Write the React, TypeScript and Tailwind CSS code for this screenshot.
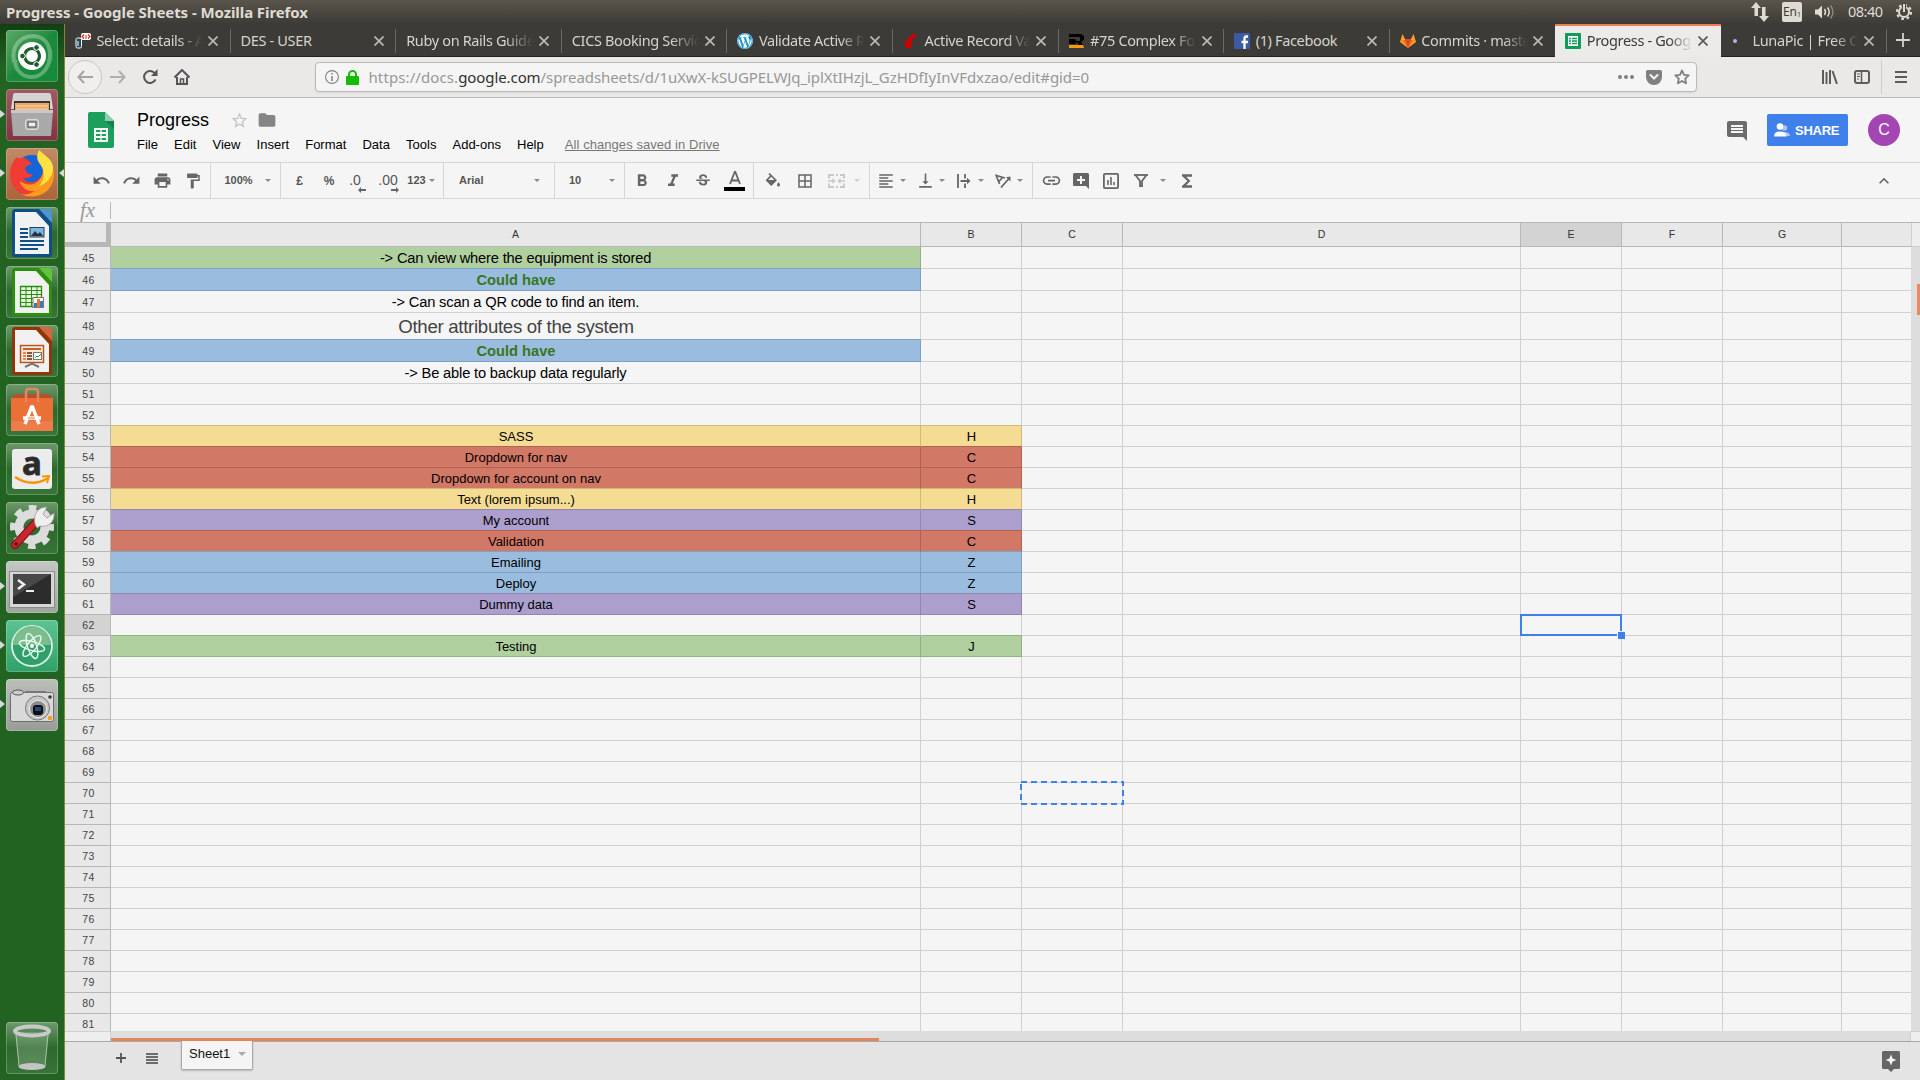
import React from "react";
import {
  MdUndo, MdRedo, MdPrint, MdFormatPaint, MdFormatItalic, MdFormatBold, MdStrikethroughS,
  MdBorderAll, MdFormatAlignLeft, MdVerticalAlignBottom, MdInsertLink, MdFolder, MdStarBorder,
  MdFunctions, MdKeyboardArrowUp, MdComment,
} from "react-icons/md";
import { FaWordpress } from "react-icons/fa";

type Kids = { children?: React.ReactNode };

/* ---------- system panel ---------- */

function TopPanel() {
  return (
    <div className="flex h-6 shrink-0 items-center bg-linear-to-b from-[#59554c] to-[#3d3b37] text-[#dfdbd2]">
      <span className="ml-[6px] whitespace-nowrap text-[15px] font-bold tracking-[-0.08px]">Progress - Google Sheets - Mozilla Firefox</span>
      <div className="ml-auto flex items-center pr-[8px]">
        <svg width="18" height="20" viewBox="0 0 18 20" fill="#dfdbd2" className="mr-[13px]">
          <path d="M5 0l5 6H7v8H3.500V6H0zM13 20l-5-6h3V5h3.500v9H18z" />
        </svg>
        <span className="mr-[13px] flex h-5 w-5 items-center justify-center rounded-[2px] bg-[#dfdbd2] text-[12px] text-[#3c3b37]">
          En<span className="mt-[7px] text-[7px]">1</span>
        </span>
        <svg width="20" height="16" viewBox="0 0 20 16" className="mr-[13px]" fill="none" stroke="#dfdbd2" strokeWidth="1.500">
          <path d="M0 5.500h3l4-4v13l-4-4H0z" fill="#dfdbd2" stroke="none" />
          <path d="M9.500 5q2 3 0 6M12.500 3.500q3.500 4.500 0 9" />
          <path d="M15.500 1.500q5 6.500 0 13" stroke="#8a867d" />
        </svg>
        <span className="mr-[13px] w-[35px] text-[14.500px] tracking-[-0.5px]">08:40</span>
        <svg width="16" height="18" viewBox="0 0 16 18" fill="none" stroke="#dfdbd2">
          <circle cx="8" cy="9" r="5" strokeWidth="2" />
          <circle cx="8" cy="9" r="7" strokeWidth="2.200" strokeDasharray="2.700 2.800" />
          <path d="M8 0v9" stroke="#48453e" strokeWidth="4" />
          <path d="M8 1v8" strokeWidth="2" />
        </svg>
      </div>
    </div>
  );
}

/* ---------- launcher ---------- */

function Tile({ bg, run, active, children }: Kids & { bg: string; run?: boolean; active?: boolean }) {
  return (
    <div className="relative flex h-[52px] w-full shrink-0 justify-center pr-px">
      {run && <span className="absolute top-[21px] left-0 border-y-[4px] border-l-[5px] border-y-transparent border-l-[#d8d8d8]" />}
      {active && <span className="absolute top-[21px] right-0 border-y-[4px] border-r-[5px] border-y-transparent border-r-[#d8d8d8]" />}
      <div className={"h-[52px] w-[52px] rounded-[4px] shadow-[inset_0_0_0_1px_rgba(255,255,255,0.22)] " + bg}>
        <svg width="52" height="52" viewBox="0 0 52 52">{children}</svg>
      </div>
    </div>
  );
}

const glass = "bg-linear-to-b from-[#6d9a6c] via-[#2c692c] to-[#397539]";

function OfficeDoc({ color, light, children }: Kids & { color: string; light: string }) {
  return (
    <>
      <path d="M8 2h26l12 12v33q0 3-3 3H9q-3 0-3-3V4z" fill={color} />
      <path d="M33 2h10q3 0 3 3v11z" fill={light} />
      <path d="M9 5h21l13 14v28H9z" fill="#f1f1f1" />
      {children}
    </>
  );
}

function Launcher() {
  return (
    <div className="flex w-[65px] shrink-0 flex-col gap-[7px] border-r border-[#7c8a3a] bg-linear-to-b from-[#123f12] via-[#226322] via-[4%] to-[#226322] pt-[6px] pb-[6px]">
      <Tile bg="bg-linear-to-br from-[#5aa968] via-[#1b8a3c] to-[#158a3a]">
        <path d="M8 32C5 16 14 6 28 6c14 1 18 14 15 26M44 20c2 16-8 28-20 27C14 46 9 38 9 30" fill="none" stroke="#fff" strokeOpacity=".3" strokeWidth="4" />
        <circle cx="26" cy="26" r="14" fill="#fff" />
        <circle cx="26" cy="26" r="7.500" fill="none" stroke="#1d5a2c" strokeWidth="3.200" />
        {[[16.5, 26], [30.5, 17.500], [30.5, 34.500]].map(([x, y]) => (
          <circle key={x + "-" + y} cx={x} cy={y} r="2.800" fill="#1d5a2c" stroke="#fff" strokeWidth="1" />
        ))}
      </Tile>
      <Tile run bg="bg-linear-to-b from-[#a05a62] to-[#7d3640]">
        <path d="M7 6q0-2 2-2h34q2 0 2 2l2 14H5z" fill="#d4d4d4" />
        <path d="M8 12h36v10H8z" fill="#3d3530" />
        <path d="M9 14h34v8H9z" fill="#e9a565" />
        <path d="M10 17h32M10 20h32" stroke="#f6dcc0" />
        <path d="M5 21h42l-2 26H7z" fill="#a9a9a9" />
        <path d="M5 21h42v3H5z" fill="#c9c9c9" />
        <rect x="19.500" y="30.500" width="13" height="10" rx="2" fill="#b8b8b8" stroke="#ddd" />
        <rect x="22" y="33" width="8" height="5" fill="#eee" stroke="#444" />
      </Tile>
      <Tile run active bg="bg-linear-to-b from-[#c08a66] to-[#a9653a]">
        <circle cx="26" cy="26" r="19" fill="#1565d8" />
        <path d="M33 2c2 5-1 8 2 12 3 5 3 12-2 17-5 5-13 4-16-1 4 1 8 0 10-4-5 1-7-2-8-6 2-3 5-3 7-4-2-2-5-4-7-6-4-1-7 2-8-1-4 4-7 10-7 17 0 14 10 22 22 22s22-10 22-22C48 15 40 8 33 2z" fill="#f03c35" />
        <path d="M33 2c2 5-1 8 2 12 4 8 2 16-4 20-5 4-13 3-17-1 1 7 8 11 15 10-5 3-10 4-14 3 14 7 33-1 33-20C48 15 40 8 33 2z" fill="#ff9a1e" />
        <path d="M33 2c-2 5-3 9 1 14 6 8 4 17-1 22 9-3 15-11 14-20C45 10 38 7 33 2z" fill="#ffe13f" />
      </Tile>
      <Tile bg={glass}>
        <OfficeDoc color="#0d4f86" light="#4f94cf">
          <path d="M14 22h8M14 26h8M14 30h8M14 34h24M14 38h24M14 42h18" stroke="#0d4f86" strokeWidth="1.800" />
          <rect x="24" y="20.500" width="14" height="9.500" fill="#7fb7de" stroke="#23435e" />
          <path d="M25 29l4-5 3 3 2-2 3 4z" fill="#27323a" />
        </OfficeDoc>
      </Tile>
      <Tile bg={glass}>
        <OfficeDoc color="#2a8f0f" light="#63c23d">
          <path d="M14.500 20.500h21v20h-21z" fill="#e6f3df" stroke="#2a8f0f" strokeWidth="1.300" />
          <path d="M14 24.500h22M14 28.500h22M14 32.500h22M14 36.500h22M20 20v21M25.500 20v21M31 20v21" stroke="#2a8f0f" />
          <rect x="27" y="31.500" width="10.500" height="10" fill="#fff" stroke="#777" />
          <path d="M28 37h3v4h-3zM34 35h3v6h-3z" fill="#2c7fc4" /><path d="M31 33h3v8h-3z" fill="#e8772a" />
        </OfficeDoc>
      </Tile>
      <Tile bg={glass}>
        <OfficeDoc color="#933506" light="#d3673f">
          <rect x="14.500" y="20.500" width="23" height="17" fill="#f7e6d7" stroke="#b5501b" strokeWidth="1.400" />
          <path d="M17 24h18" stroke="#c4642a" strokeWidth="2" />
          <path d="M17 28h3M17 31h3M17 34h3" stroke="#e08a4e" strokeWidth="2" /><path d="M21 28h5M21 31h5M21 34h5" stroke="#5a2a10" strokeWidth="1.500" />
          <rect x="27.500" y="27.500" width="8" height="7" fill="#fff" stroke="#777" /><path d="M29 33l2-2 1 1 3-3" stroke="#2e9a2e" fill="none" />
          <path d="M26 38v2M19 42l6-3h2l6 3" stroke="#777" strokeWidth="2" fill="none" />
        </OfficeDoc>
      </Tile>
      <Tile bg={glass}>
        <path d="M5 14l5-4h32l5 4z" fill="#b5542c" />
        <path d="M5 14h42v33H5z" fill="#ea7038" /><path d="M5 37h42v10H5z" fill="#ed7c49" />
        <path d="M20 18V8q0-3 3-3h6q3 0 3 3v10" fill="none" stroke="#e28465" strokeWidth="2.500" />
        <path d="M19 40l6.500-17h1L33 40" fill="none" stroke="#fff" strokeWidth="3.500" /><path d="M17 34h18" stroke="#fff" strokeWidth="3.500" /><path d="M22 34h7" stroke="#ea7038" strokeWidth="1" />
      </Tile>
      <Tile bg={glass}>
        <rect x="6" y="6" width="40" height="40" rx="3" fill="#ececec" />
        <text x="26" y="32" textAnchor="middle" fontSize="33" fontWeight="bold" fill="#2b2b2b" stroke="#2b2b2b" strokeWidth=".8">a</text>
        <path d="M9 34q17 11 33 1" fill="none" stroke="#f79400" strokeWidth="2.500" /><path d="M36 33.500l7-.5-2 7" fill="none" stroke="#f79400" strokeWidth="2" />
      </Tile>
      <Tile bg={glass}>
        <circle cx="26" cy="25" r="19" fill="none" stroke="#dcdcdc" strokeWidth="6" strokeDasharray="7.500 7.420" strokeDashoffset="3.750" />
        <circle cx="26" cy="25" r="13" fill="none" stroke="#dcdcdc" strokeWidth="9" />
        <path d="M9 43l24-26" stroke="#7e1218" strokeWidth="8" strokeLinecap="round" />
        <path d="M9 43l24-26" stroke="#c9252d" strokeWidth="6" strokeLinecap="round" />
        <path d="M29 22c-2-9 2-17 12-17l-4 7 4 4 7-5c1 9-6 15-14 13l-3 2z" fill="#efefef" stroke="#999" strokeWidth=".8" />
        <circle cx="10" cy="42" r="1.800" fill="#5e0d12" />
      </Tile>
      <Tile run bg="bg-linear-to-b from-[#c4c8c2] to-[#9ea39c]">
        <rect x="3.500" y="10.500" width="45" height="36" fill="#d6d6d6" stroke="#8b8b8b" />
        <rect x="7" y="13" width="38" height="30" fill="#2c2c2c" /><path d="M7 13h38L7 36z" fill="#484848" />
        <path d="M12 19l6 4.500-6 4.500" fill="none" stroke="#eee" strokeWidth="2.500" /><path d="M20 30h8" stroke="#eee" strokeWidth="2" />
      </Tile>
      <Tile run bg="bg-linear-to-b from-[#5cc394] to-[#2ea168]">
        <circle cx="26" cy="26" r="20" fill="#2fa06b" stroke="#dcefe4" strokeWidth="1.800" />
        <path d="M7 25a19 19 0 0138 0z" fill="#79be8b" />
        <g fill="none" stroke="#eaf6ee" strokeWidth="1.400">
          <ellipse cx="26" cy="26" rx="13" ry="4.500" transform="rotate(15 26 26)" />
          <ellipse cx="26" cy="26" rx="13" ry="4.500" transform="rotate(72 26 26)" />
          <ellipse cx="26" cy="26" rx="13" ry="4.500" transform="rotate(130 26 26)" />
        </g>
        <circle cx="26" cy="26" r="2" fill="#fff" />
      </Tile>
      <Tile run bg="bg-linear-to-b from-[#b9bfb8] to-[#989d97]">
        <rect x="4.500" y="13.500" width="43" height="29" rx="2" fill="#d9d9d9" stroke="#6e6e6e" />
        <ellipse cx="12" cy="13.500" rx="5.500" ry="2.500" fill="#ccc" stroke="#555" />
        <path d="M19 13h21" stroke="#777" strokeWidth="2" />
        <circle cx="31.500" cy="29" r="12" fill="#c9c9c9" stroke="#777" /><circle cx="32" cy="30" r="8.500" fill="#8c8c8c" stroke="#eee" />
        <rect x="27" y="26" width="10" height="10" rx="3" fill="#0d0f14" /><rect x="29" y="28" width="6" height="4" fill="#24457e" />
        <rect x="42" y="37" width="4" height="4" fill="#f0a028" /><circle cx="44" cy="18" r="1.800" fill="#333" />
      </Tile>
      <div className="mt-auto">
        <Tile bg={glass}>
          <path d="M9 10l4 36h26l4-36z" fill="#fff" fillOpacity=".18" />
          <ellipse cx="26" cy="44.500" rx="13.500" ry="3.500" fill="#c4c4c4" />
          <ellipse cx="26" cy="9" rx="17" ry="4.500" fill="none" stroke="#c9c9c9" strokeWidth="4" />
          <path d="M10 12l3 32M42 12l-3 32" stroke="#a9c0a9" strokeWidth="1" />
        </Tile>
      </div>
    </div>
  );
}

/* ---------- browser tabs ---------- */

const SheetsFav = () => (
  <svg width="16" height="16" viewBox="0 0 16 16">
    <rect width="16" height="16" rx="1" fill="#0f9d58" /><rect x="3" y="3" width="10" height="10" fill="#fff" />
    <path d="M4 5.500h2M7 5.500h5M4 8h2M7 8h5M4 10.500h2M7 10.500h5" stroke="#0f9d58" strokeWidth="1.300" />
  </svg>
);

const tabs: { title: string; icon?: React.ReactNode; active?: boolean }[] = [
  {
    title: "Select: details - A",
    icon: (
      <svg width="16" height="16" viewBox="0 0 16 16">
        <rect x="1" y="5" width="5.500" height="10" rx="1.500" fill="#24495c" stroke="#fff" /><path d="M3 8v5" stroke="#fff" />
        <rect x="6" y="0" width="10" height="7" rx="2" fill="#fff" /><path d="M9 1.500L7 3.500l2 2M13 1.500l2 2-2 2" stroke="#d22" fill="none" strokeWidth="1.200" /><path d="M11 2v4" stroke="#d22" />
      </svg>
    ),
  },
  { title: "DES - USER" },
  { title: "Ruby on Rails Guide" },
  { title: "CICS Booking Servic" },
  { title: "Validate Active R", icon: <span className="flex h-4 w-4 items-center justify-center rounded-full bg-[#1a94cc] text-white"><FaWordpress size={16} /></span> },
  {
    title: "Active Record Va",
    icon: (
      <svg width="16" height="16" viewBox="0 0 16 16">
        <path d="M2 15C3 7 7 2 12 1l2 1C10 5 8 9 8.500 15z" fill="#c00" /><path d="M1 11l1-1M2 7.500l1.300.5M5 3.500l1 1M9 .8l.5 1" stroke="#c00" strokeWidth="1.400" />
      </svg>
    ),
  },
  {
    title: "#75 Complex For",
    icon: (
      <svg width="16" height="16" viewBox="0 0 16 16">
        <path d="M0 1h12l3 2v4l-3 2 2 3h-4L7 8h4V4H0z" fill="#000" /><path d="M0 6h6l2 3-2 2H0z" fill="#000" /><path d="M0 12h14l1 3H0z" fill="#f79a10" />
      </svg>
    ),
  },
  {
    title: "(1) Facebook",
    icon: (
      <svg width="16" height="16" viewBox="0 0 16 16">
        <rect width="16" height="16" rx="1" fill="#3b5ba5" /><path d="M14 3.500h-1.500q-2 0-2 2V16M7.500 9H14" stroke="#fff" strokeWidth="2.300" fill="none" />
      </svg>
    ),
  },
  {
    title: "Commits · maste",
    icon: (
      <svg width="16" height="16" viewBox="0 0 16 16">
        <path d="M8 15L0 9l2.500-8L5 6h6l2.500-5L16 9z" fill="#fca326" /><path d="M8 15L2 7h12z" fill="#fc6d26" /><path d="M8 15L5 6h6z" fill="#e24329" />
      </svg>
    ),
  },
  { title: "Progress - Google", icon: <SheetsFav />, active: true },
  { title: "LunaPic | Free On", icon: <span className="ml-[2px] h-1 w-1 rounded-full bg-[#b4b4ee]" /> },
];

function TabBar() {
  return (
    <div className="flex h-[33px] shrink-0 bg-[#3c3b37] text-[14.500px] text-[#d6d3cb]">
      {tabs.map((t, i) => (
        <div
          key={t.title}
          className={
            "relative flex w-[165.6px] shrink-0 items-center pl-[10px] " +
            (t.active ? "border-t-2 border-[#ee7d54] bg-[#edebe9] pb-px text-[#3c3b37]" : "border-b border-[#242021] pt-[2px]")
          }
        >
          {t.icon && <span className="flex w-[21.5px] shrink-0 items-center">{t.icon}</span>}
          <span
            className={
              "overflow-hidden tracking-[-0.35px] whitespace-nowrap " +
              (t.title.length > 12 ? "mask-r-from-[78%] mask-r-to-[100%] " : "") +
              (t.icon ? "w-[105.5px]" : "w-[127px]")
            }
          >
            {t.title}
          </span>
          <svg width="10" height="10" viewBox="0 0 10 10" className="ml-[6px] shrink-0" stroke={t.active ? "#5a5955" : "#bdbab2"} strokeWidth="1.700">
            <path d="M.5.5l9 9M9.500.5l-9 9" />
          </svg>
          {!t.active && i !== 8 && <span className="absolute top-[5px] right-0 h-6 w-px bg-[#6b6962]" />}
        </div>
      ))}
      <div className="flex flex-1 items-center justify-center border-b border-[#242021]">
        <svg width="14" height="14" viewBox="0 0 14 14" stroke="#d6d3cb" strokeWidth="1.800"><path d="M7 0v14M0 7h14" /></svg>
      </div>
    </div>
  );
}

/* ---------- navigation bar ---------- */

function NavBar() {
  return (
    <div className="flex h-[41px] shrink-0 items-center border-b border-[#b9b9b9] bg-[#ebe9e7] text-[#5c5c5a]">
      <span className="ml-[3px] flex h-[34px] w-[34px] items-center justify-center rounded-full border border-[#c8c6c4] bg-[#f0efed]">
        <svg width="16" height="14" viewBox="0 0 16 14" fill="none" stroke="#a5a4a2" strokeWidth="2"><path d="M7 1L1.500 7 7 13M1.500 7H16" /></svg>
      </span>
      <svg width="16" height="14" viewBox="0 0 16 14" fill="none" stroke="#b0afad" strokeWidth="2" className="ml-[8px]"><path d="M9 1l5.500 6L9 13M14.500 7H0" /></svg>
      <svg width="16" height="16" viewBox="0 0 16 16" fill="none" stroke="#555" strokeWidth="2" className="ml-[16px]"><path d="M13.500 10.500A6 6 0 1113 4.500" /><path d="M15.500 0v7H9z" fill="#555" stroke="none" /></svg>
      <svg width="16" height="16" viewBox="0 0 16 16" fill="none" stroke="#555" strokeWidth="2" className="ml-[16px]"><path d="M.5 8.500L8 1l7.500 7.500M3 8v7h10V8" /><path d="M6.500 15v-5h3v5" strokeWidth="1.500" /></svg>
      <div className="ml-[125px] flex h-[30px] w-[1382px] items-center rounded-[4px] border border-[#bdbbb9] bg-[#f5f5f5] shadow-[0_1px_2px_rgba(0,0,0,0.08)]">
        <svg width="14" height="14" viewBox="0 0 14 14" className="ml-[9px]" fill="none" stroke="#808080"><circle cx="7" cy="7" r="6.400" strokeWidth="1.100" /><path d="M7 6v5M7 3v1.600" strokeWidth="1.500" /></svg>
        <svg width="13" height="15" viewBox="0 0 13 15" className="ml-[6.500px]"><rect x="0" y="6" width="13" height="9" rx="1" fill="#12bc00" /><path d="M3 7V4.500a3.500 3.500 0 017 0V7" fill="none" stroke="#12bc00" strokeWidth="2" /></svg>
        <span className="ml-[10px] text-[15px] tracking-[-0.09px] whitespace-nowrap text-[#989898]">
          <span className="tracking-[0.1px]">https://docs.</span><span className="text-[#303030]">google.com</span>/spreadsheets/d/1uXwX-kSUGPELWJq_iplXtIHzjL_GzHDfIyInVFdxzao/edit#gid=0
        </span>
        <div className="ml-auto flex items-center pr-[6px]">
          <svg width="16" height="4" viewBox="0 0 16 4" fill="#808080"><circle cx="2" cy="2" r="2" /><circle cx="8" cy="2" r="2" /><circle cx="14" cy="2" r="2" /></svg>
          <svg width="16" height="15" viewBox="0 0 16 15" className="ml-[12px]"><path d="M1.500 0h13Q16 0 16 1.500V7a8 8 0 01-16 0V1.500Q0 0 1.500 0z" fill="#808080" /><path d="M4.500 5L8 8.500 11.500 5" fill="none" stroke="#f5f5f5" strokeWidth="2" strokeLinecap="round" /></svg>
          <svg width="16" height="16" viewBox="0 0 16 16" className="ml-[12px]"><path d="M8 1.500l2 4.300 4.700.6-3.500 3.200.9 4.700L8 12l-4.100 2.300.9-4.700L1.300 6.400 6 5.800z" fill="none" stroke="#808080" strokeWidth="1.800" strokeLinejoin="round" /></svg>
        </div>
      </div>
      <div className="ml-auto flex items-center pr-[13px]">
        <svg width="16" height="14" viewBox="0 0 16 14" fill="none" stroke="#5c5c5a" strokeWidth="2"><path d="M1 0v14M4.500 2v12M8 0v14M10.500 1l4.500 13" /></svg>
        <svg width="16" height="14" viewBox="0 0 16 14" fill="none" stroke="#5c5c5a" className="ml-[16px]"><rect x="1" y="1" width="14" height="12" rx="2" strokeWidth="2" /><path d="M7.500 1v12" strokeWidth="1.500" /><path d="M3 4h3M3 6.500h3M3 9h2" /></svg>
        <span className="ml-[11px] h-[34px] w-px bg-[#cfcdcb]" />
        <svg width="12" height="12" viewBox="0 0 12 12" stroke="#5c5c5a" strokeWidth="2" className="ml-[13px]"><path d="M0 1h12M0 6h12M0 11h12" /></svg>
      </div>
    </div>
  );
}

/* ---------- document header ---------- */

function DocHeader() {
  return (
    <div className="flex h-[65px] shrink-0 border-b border-[#d6d6d6]">
      <svg width="26" height="36" viewBox="0 0 26 36" className="mt-[14px] ml-[23px]">
        <path d="M2 0h15l9 9v25q0 2-2 2H2q-2 0-2-2V2Q0 0 2 0z" fill="#1c9f5c" />
        <path d="M17 9h9v8z" fill="#178249" />
        <path d="M17 0l9 9h-9z" fill="#8ccfac" />
        <path d="M6 16h14v14H6z" fill="#f4f4f4" />
        <path d="M8 19h4.300M13.700 19H18M8 23h4.300M13.700 23H18M8 27h4.300M13.700 27H18" stroke="#1c9f5c" strokeWidth="2" />
      </svg>
      <div className="ml-[23px] flex flex-col">
        <div className="mt-[10px] flex h-[24px] items-center">
          <span className="w-[72px] text-[18px] leading-[24px] text-black">Progress</span>
          <MdStarBorder size={19} className="ml-[20.500px]" color="#c4c4c4" />
          <MdFolder size={20} className="ml-[8px]" color="#858585" />
        </div>
        <div className="mt-[4px] flex h-[18px] items-center gap-[16.1px] text-[13px] text-black">
          {["File", "Edit", "View", "Insert", "Format", "Data", "Tools", "Add-ons", "Help"].map((m) => (
            <span key={m}>{m}</span>
          ))}
          <span className="ml-[5px] tracking-[0.06px] text-[#777] underline underline-offset-1">All changes saved in Drive</span>
        </div>
      </div>
      <div className="ml-auto flex items-center pr-[20px]">
        <MdComment size={24} color="#6b6b6b" className="mt-px" />
        <div className="ml-[18px] flex h-8 w-[81px] items-center rounded-[2px] bg-[#4080ea] pl-[7px] text-[13px] font-bold text-white">
          <svg width="16" height="14" viewBox="0 0 16 14"><circle cx="10.500" cy="5" r="2.800" fill="#a8c5f6" /><path d="M9 13q0-4 3-4 4 .5 4 4z" fill="#a8c5f6" /><circle cx="6" cy="3.500" r="3.300" fill="#fff" /><path d="M0 13.500q0-5 6-5 6.500 0 6.500 5z" fill="#fff" /></svg>
          <span className="mt-px ml-[5px] tracking-[-0.25px]">SHARE</span>
        </div>
        <span className="ml-[20px] flex h-8 w-8 items-center justify-center rounded-full bg-[#a345b3] text-[16px] text-white">C</span>
      </div>
    </div>
  );
}

/* ---------- toolbar ---------- */

const Caret = ({ dim }: { dim?: boolean }) => (
  <span className={"h-0 w-0 shrink-0 border-x-[3px] border-t-[3.500px] border-x-transparent " + (dim ? "border-t-[#cfcfcf]" : "border-t-[#8a8a8a]")} />
);
const Cell = ({ w, children }: Kids & { w: string }) => (
  <span className={"flex shrink-0 items-center justify-center [&>*]:shrink-0 " + w}>{children}</span>
);
const Group = ({ w, children }: Kids & { w: string }) => (
  <div className={"flex h-full shrink-0 items-center border-r border-[#d6d6d6] " + w}>{children}</div>
);

function Toolbar() {
  return (
    <div className="flex h-[36px] shrink-0 items-center border-b border-[#d6d6d6] text-[11px] font-bold text-[#555]">
      <Group w="w-[146px] pl-[21px]">
        <Cell w="w-[30.5px]"><MdUndo size={19} color="#666" /></Cell>
        <Cell w="w-[30.5px]"><MdRedo size={19} color="#666" /></Cell>
        <Cell w="w-[30.5px]"><MdPrint size={19} color="#666" /></Cell>
        <Cell w="w-[30.5px]"><MdFormatPaint size={18} color="#666" /></Cell>
      </Group>
      <Group w="w-[70px]"><Cell w="w-[55px]">100%</Cell><Cell w="w-[4px]"><Caret /></Cell></Group>
      <Group w="w-[163px]">
        <Cell w="w-[37px] text-[12px]">£</Cell>
        <Cell w="w-[22px] text-[12px]">%</Cell>
        <Cell w="w-[30px]">
          <span className="relative text-[14px] font-normal">.0<svg width="8" height="6" viewBox="0 0 8 6" className="absolute right-[-5px] bottom-[-2px]" fill="#666"><path d="M0 3l3-3v2h5v2H3v2z" /></svg></span>
        </Cell>
        <Cell w="w-[36px]">
          <span className="relative text-[14px] font-normal">.00<svg width="8" height="6" viewBox="0 0 8 6" className="absolute right-[-1px] bottom-[-2px]" fill="#666"><path d="M8 3L5 0v2H0v2h5v2z" /></svg></span>
        </Cell>
        <Cell w="w-[21px]">123</Cell>
        <Cell w="w-[9px]"><Caret /></Cell>
      </Group>
      <Group w="w-[111px] pl-[15px]"><span className="w-[71px]">Arial</span><Cell w="w-[14px]"><Caret /></Cell></Group>
      <Group w="w-[70px] pl-[14px]"><span className="w-[36px]">10</span><Cell w="w-[14px]"><Caret /></Cell></Group>
      <Group w="w-[129px]">
        <Cell w="w-[34px]"><MdFormatBold size={20} color="#666" /></Cell>
        <Cell w="w-[28px]"><MdFormatItalic size={20} color="#666" /></Cell>
        <Cell w="w-[32px]"><MdStrikethroughS size={18} color="#666" /></Cell>
        <Cell w="w-[31px]">
          <svg width="22" height="20" viewBox="0 0 22 20"><path d="M6 13L10.700 1h.6L16 13M7.500 9.500h7" fill="none" stroke="#666" strokeWidth="1.800" /><path d="M0 16h21v4H0z" fill="#000" /></svg>
        </Cell>
      </Group>
      <Group w="w-[116px]">
        <Cell w="w-[38px]">
          <svg width="16" height="16" viewBox="0 0 16 16" fill="#666"><path d="M3.500 1.200L4.700 0 12 7.200 6.300 13 .6 7.200 5 2.800z" /><path d="M6.300 3.800L3.200 7h6.200z" fill="#f5f5f5" /><path d="M13.500 9q1.500 2 1.500 3a1.500 1.500 0 01-3 0q0-1 1.500-3z" /></svg>
        </Cell>
        <Cell w="w-[25px]"><MdBorderAll size={18} color="#666" /></Cell>
        <Cell w="w-[38px]">
          <svg width="17" height="14" viewBox="0 0 17 14" fill="none" stroke="#c8c8c8"><path d="M1 4.500V1h5M8 1h2M12 1h4v3.500M1 9.500V13h5M8 13h2M12 13h4V9.500" strokeWidth="1.900" /><path d="M0 7h6M17 7h-6" strokeWidth="1.600" /><path d="M4.500 4L7.500 7l-3 3zM12.500 4l-3 3 3 3z" fill="#c8c8c8" stroke="none" /></svg>
        </Cell>
        <Cell w="w-[4px]"><Caret dim /></Cell>
      </Group>
      <Group w="w-[163px] pl-[4px]">
        <Cell w="w-[24px]"><MdFormatAlignLeft size={18} color="#666" /></Cell><Cell w="w-[10px]"><Caret /></Cell>
        <Cell w="ml-[5px] w-[24px]"><MdVerticalAlignBottom size={19} color="#666" /></Cell><Cell w="w-[10px]"><Caret /></Cell>
        <Cell w="ml-[5px] w-[24px]">
          <svg width="14" height="14" viewBox="0 0 14 14" fill="none" stroke="#666" strokeWidth="1.800"><path d="M1 0v14M8 0v4.500M8 9.500V14M3.500 7H12" /><path d="M10 3.800L13.500 7 10 10.200z" fill="#666" stroke="none" /></svg>
        </Cell><Cell w="w-[10px]"><Caret /></Cell>
        <Cell w="ml-[5px] w-[24px]">
          <svg width="16" height="14" viewBox="0 0 16 14" fill="none" stroke="#666" strokeWidth="1.700"><path d="M4.500 10L1.200 1.500 10 4M3.500 8L7.500 3.500" /><path d="M6 13.500l8-9" /><path d="M15.500 2.500V7.500L11 3.300z" fill="#666" stroke="none" /></svg>
        </Cell><Cell w="w-[10px]"><Caret /></Cell>
      </Group>
      <Cell w="w-[36px]"><MdInsertLink size={21} color="#666" /></Cell>
      <Cell w="w-[24px]">
        <svg width="16" height="16" viewBox="0 0 16 16"><path d="M1.500 0h13Q16 0 16 1.500V16l-3-3H1.500Q0 13 0 11.500v-10Q0 0 1.500 0z" fill="#666" /><path d="M8 3v8M4 7h8" stroke="#f5f5f5" strokeWidth="2" /></svg>
      </Cell>
      <Cell w="w-[36px]">
        <svg width="16" height="16" viewBox="0 0 16 16" fill="none" stroke="#666"><rect x=".9" y=".9" width="14.200" height="14.200" rx="1" strokeWidth="1.800" /><path d="M5 7v5M8 4v8M11 9v3" strokeWidth="1.600" /></svg>
      </Cell>
      <Cell w="w-[24px]">
        <svg width="14" height="13" viewBox="0 0 14 13" fill="none" stroke="#666" strokeWidth="1.800"><path d="M0 1h14" /><path d="M1.500 1L6 7v5.500h2V7l4.500-6" /></svg>
      </Cell>
      <Cell w="w-[19px]"><Caret /></Cell>
      <Cell w="w-[30px]"><MdFunctions size={20} color="#666" /></Cell>
      <Cell w="ml-auto w-[72px]"><MdKeyboardArrowUp size={20} color="#666" /></Cell>
    </div>
  );
}

/* ---------- spreadsheet ---------- */

const cols = [
  { n: "A", w: "w-[810px]" }, { n: "B", w: "w-[101px]" }, { n: "C", w: "w-[101px]" }, { n: "D", w: "w-[398px]" },
  { n: "E", w: "w-[101px]" }, { n: "F", w: "w-[101px]" }, { n: "G", w: "w-[119px]" }, { n: "", w: "w-[69px]" },
];

type Tone = "green" | "blue" | "yellow" | "red" | "purple";
const fill: Record<Tone, string> = { green: "bg-[#b0d0a0]", blue: "bg-[#9abddf]", yellow: "bg-[#f4dc93]", red: "bg-[#d27866]", purple: "bg-[#ad9fcd]" };
const bottomLine: Record<Tone, string> = { green: "border-b-[#92b085]", blue: "border-b-[#7f9fc4]", yellow: "border-b-[#d2b97b]", red: "border-b-[#b06352]", purple: "border-b-[#9086b1]" };
const rightLine: Record<Tone, string> = { green: "border-r-[#92b085]", blue: "border-r-[#7f9fc4]", yellow: "border-r-[#d2b97b]", red: "border-r-[#b06352]", purple: "border-r-[#9086b1]" };

type Row = { a?: string; b?: string; tone?: Tone; h?: string; cls?: string };
const big = "pt-[2px] text-[14.667px] tracking-[-0.17px]";
const heading = "pt-[2px] pl-px text-[14.667px] font-bold text-[#38761d]";
const rowData: Record<number, Row> = {
  45: { a: "-> Can view where the equipment is stored", tone: "green", h: "h-[22px]", cls: big },
  46: { a: "Could have", tone: "blue", h: "h-[22px]", cls: heading },
  47: { a: "-> Can scan a QR code to find an item.", h: "h-[22px]", cls: big },
  48: { a: "Other attributes of the system", h: "h-[27px]", cls: "text-[18.667px] tracking-[-0.31px] text-[#434343] pt-[2px] pl-px" },
  49: { a: "Could have", tone: "blue", h: "h-[22px]", cls: heading },
  50: { a: "-> Be able to backup data regularly", h: "h-[22px]", cls: big },
  53: { a: "SASS", b: "H", tone: "yellow" },
  54: { a: "Dropdown for nav", b: "C", tone: "red" },
  55: { a: "Dropdown for account on nav", b: "C", tone: "red" },
  56: { a: "Text (lorem ipsum...)", b: "H", tone: "yellow" },
  57: { a: "My account", b: "S", tone: "purple" },
  58: { a: "Validation", b: "C", tone: "red" },
  59: { a: "Emailing", b: "Z", tone: "blue" },
  60: { a: "Deploy", b: "Z", tone: "blue" },
  61: { a: "Dummy data", b: "S", tone: "purple" },
  63: { a: "Testing", b: "J", tone: "green" },
};
const rowNumbers = Array.from({ length: 37 }, (_, i) => 45 + i);

function toneAt(row: number, col: string): Tone | undefined {
  const r = rowData[row];
  if (!r || !r.tone) return undefined;
  if (col === "A") return r.tone;
  return col === "B" && r.b ? r.tone : undefined;
}

function Sheet() {
  return (
    <div className="flex h-[819px] shrink-0 flex-col border-b border-[#a8a8a8]">
      <div className="flex h-[24px] shrink-0 text-[10.500px] text-[#333]">
        <div className="w-[46px] shrink-0 border-r-[5px] border-b-[5px] border-[#b7b7b7] bg-[#e8e8e8]" />
        {cols.map((c) => (
          <div
            key={c.n}
            className={
              "flex shrink-0 items-center justify-center border-b border-[#b7b7b7] pt-px " + c.w +
              (c.n === "E" ? " bg-[#d3d3d3]" : " bg-[#e8e8e8]") + (c.n === "" ? "" : " border-r")
            }
          >
            {c.n}
          </div>
        ))}
        <div className="flex-1 border-b border-l border-[#d0d0d0] bg-[#eee]" />
      </div>
      <div className="flex h-[784px] shrink-0">
        <div className="w-[1846px] overflow-hidden">
          {rowNumbers.map((n) => {
            const r = rowData[n] || {};
            return (
              <div key={n} className={"flex " + (r.h || "h-[21px]")}>
                <div
                  className={
                    "flex w-[46px] shrink-0 items-center justify-center border-r border-b border-[#b7b7b7] pt-[2px] pl-[2px] text-[10.500px] tracking-[0.3px] text-[#444] " +
                    (n === 62 ? "bg-[#d3d3d3]" : "bg-[#e8e8e8]")
                  }
                >
                  {n}
                </div>
                {cols.map((c) => {
                  const own = toneAt(n, c.n);
                  const line = toneAt(n + 1, c.n) || own;
                  return (
                    <div
                      key={c.n}
                      className={
                        "relative flex shrink-0 items-center justify-center border-b leading-none whitespace-nowrap " + c.w +
                        (c.n === "" ? "" : " border-r") +
                        (own ? " " + fill[own] + " " + rightLine[own] : " border-r-[#d0d0d0]") +
                        (line ? " " + bottomLine[line] : " border-b-[#d0d0d0]") +
                        " " + (r.cls || "pt-px pl-px text-[13px]")
                      }
                    >
                      {c.n === "A" ? r.a : c.n === "B" ? r.b : null}
                      {n === 62 && c.n === "E" && (
                        <div className="absolute -top-px -right-px -bottom-[1px] -left-px z-10 border-2 border-[#4080ea]">
                          <span className="absolute -right-[5px] -bottom-[5px] h-[8px] w-[8px] border-t border-l border-[#f5f5f5] bg-[#4080ea]" />
                        </div>
                      )}
                      {n === 70 && c.n === "C" && (
                        <svg width="104" height="24" viewBox="0 0 104 24" className="absolute -top-[2px] -left-[2px] z-10">
                          <rect x="1" y="1" width="102" height="22" fill="none" stroke="#4080ea" strokeWidth="2" strokeDasharray="6 4" />
                        </svg>
                      )}
                    </div>
                  );
                })}
              </div>
            );
          })}
        </div>
        <div className="flex flex-1 justify-end bg-[#ddd] pt-[37px]">
          <span className="h-[31px] w-[3px] bg-[#e78963]" />
        </div>
      </div>
      <div className="flex flex-1">
        <div className="w-[46px] border-t border-r border-[#d0d0d0] bg-[#eee]" />
        <div className="flex flex-1 items-end bg-[#ddd]"><span className="h-[3px] w-[768px] bg-[#e5855f]" /></div>
        <div className="w-[10px] border-t border-l border-[#d0d0d0] bg-[#eee]" />
      </div>
    </div>
  );
}

function SheetTabs() {
  return (
    <div className="flex h-[38px] shrink-0 bg-[#e4e4e4]">
      <svg width="10" height="10" viewBox="0 0 10 10" className="mt-[11px] ml-[51px]" stroke="#555" strokeWidth="1.800"><path d="M5 0v10M0 5h10" /></svg>
      <svg width="12" height="11" viewBox="0 0 12 11" className="mt-[11px] ml-[20px]" stroke="#444" strokeWidth="1.600"><path d="M0 1h12M0 4h12M0 7h12M0 10h12" /></svg>
      <div className="-mt-px ml-[23px] flex h-[29px] w-[72px] items-center rounded-b-[2px] border border-t-0 border-[#a8a8a8] bg-[#f5f5f5] pb-[2px] pl-[7px] text-[13px] text-[#111] shadow-[0_1px_2px_rgba(0,0,0,0.2)]">
        Sheet1
        <span className="ml-[8px] border-x-[4px] border-t-[4px] border-x-transparent border-t-[#aaa]" />
      </div>
      <svg width="18" height="21" viewBox="0 0 18 21" className="mt-[9px] mr-[20px] ml-auto">
        <path d="M1.500 0h15Q18 0 18 1.500v15q0 1.500-1.500 1.500H12l-3 3-3-3H1.500Q0 18 0 16.500v-15Q0 0 1.500 0z" fill="#666" />
        <path d="M9 3.500l1.600 3.900L14.500 9l-3.900 1.600L9 14.500l-1.600-3.900L3.500 9l3.900-1.600z" fill="#f5f5f5" />
      </svg>
    </div>
  );
}

export default function App() {
  return (
    <div className="flex h-[1080px] w-[1920px] flex-col overflow-hidden font-['Noto_Sans','Open_Sans',sans-serif]">
      <TopPanel />
      <div className="flex flex-1">
        <Launcher />
        <div className="flex w-[1855px] flex-col">
          <TabBar />
          <NavBar />
          <div className="flex flex-1 flex-col bg-[#f5f5f5] font-['Liberation_Sans',Arial,sans-serif]">
            <DocHeader />
            <Toolbar />
            <div className="flex h-[24px] shrink-0 items-center border-b border-[#b7b7b7]">
              <span className="flex w-[45px] justify-center font-['Liberation_Serif',serif] text-[21px] leading-none text-[#999] italic">fx</span>
              <span className="h-[17px] w-px bg-[#b9b9b9]" />
            </div>
            <Sheet />
            <SheetTabs />
          </div>
        </div>
      </div>
    </div>
  );
}
